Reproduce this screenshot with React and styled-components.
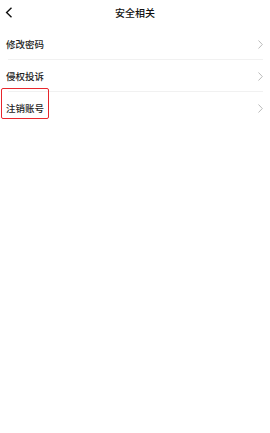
import React from "react";
import styled, { createGlobalStyle } from "styled-components";

const Global = createGlobalStyle`
  body {
    margin: 0;
    background: #fff;
    font-family: "Noto Sans CJK SC", "Noto Sans", sans-serif;
  }
`;

const Page = styled.div`
  width: 270px;
  height: 433px;
  background: #fff;
`;

const Header = styled.div`
  position: relative;
  height: 25px;
  display: flex;
  align-items: center;
  justify-content: center;
`;

const Back = styled.svg`
  position: absolute;
  left: 5px;
  top: 7px;
`;

const Title = styled.div`
  font-size: 10px;
  font-weight: 500;
  color: #111;
  line-height: 12px;
`;

const List = styled.div`
  margin-top: 3px;
`;

const Row = styled.div`
  position: relative;
  height: 32px;
  display: flex;
  align-items: center;
  justify-content: space-between;
  padding: 0 7px 0 6px;

  &::after {
    content: "";
    display: ${(p) => (p.$last ? "none" : "block")};
    position: absolute;
    left: 8px;
    right: 7px;
    bottom: 0;
    height: 1px;
    background: #f1f1f1;
  }
`;

const Label = styled.span`
  font-size: 9.5px;
  font-weight: 500;
  color: #222;
  line-height: 12px;
`;

const Highlight = styled.div`
  position: absolute;
  left: 1px;
  top: -4px;
  width: 46px;
  height: 29px;
  border: 1.5px solid #e8262c;
  border-radius: 2px;
`;

const Chevron = () => (
  <svg width="5" height="9" viewBox="0 0 5 9">
    <path d="M0.5 0.5 L4.3 4.5 L0.5 8.5" fill="none" stroke="#aaa" strokeWidth="0.8" />
  </svg>
);

const items = ["修改密码", "侵权投诉", "注销账号"];

export default function App() {
  return (
    <Page>
      <Global />
      <Header>
        <Back width="8" height="11" viewBox="0 0 8 11">
          <path d="M6.5 0.8 L1.6 5.5 L6.5 10.2" fill="none" stroke="#111" strokeWidth="1.4" />
        </Back>
        <Title>安全相关</Title>
      </Header>
      <List>
        {items.map((t, i) => (
          <Row key={t} $last={i === items.length - 1}>
            {i === items.length - 1 && <Highlight />}
            <Label>{t}</Label>
            <Chevron />
          </Row>
        ))}
      </List>
    </Page>
  );
}
